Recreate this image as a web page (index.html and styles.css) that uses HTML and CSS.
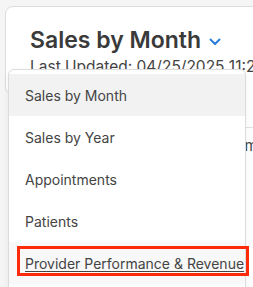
FILE: index.html
```html
<!DOCTYPE html>
<html>
<head>
<meta charset="utf-8">
<link rel="stylesheet" href="styles.css">
</head>
<body>
<div class="page">
  <div class="header-card">
    <div class="title-row">
      <h1 class="title">Sales by Month</h1>
      <svg class="chev" width="12" height="8" viewBox="0 0 12 8"><path d="M1.5 1.5 L6 6 L10.5 1.5" fill="none" stroke="#2b7de0" stroke-width="2" stroke-linecap="round" stroke-linejoin="round"/></svg>
    </div>
    <div class="updated">Last Updated: 04/25/2025 11:25 AM</div>
  </div>
  <div class="below">
    <div class="side-panel">
      <div class="side-line"></div>
      <div class="side-text">Summary</div>
      <div class="side-box"></div>
    </div>
  </div>
  <div class="menu">
    <div class="item active">Sales by Month</div>
    <div class="item">Sales by Year</div>
    <div class="item">Appointments</div>
    <div class="item">Patients</div>
    <div class="item hovered"><span class="focus-box"></span><span class="link">Provider Performance &amp; Revenue</span></div>
  </div>
</div>
</body>
</html>
```
FILE: styles.css
```css
html, body {
  margin: 0;
  padding: 0;
}
body {
  background: #f5f5f5;
  font-family: Inter, "Noto Sans", sans-serif;
  width: 253px;
  height: 287px;
  overflow: hidden;
}
.page {
  position: relative;
  width: 253px;
  height: 287px;
  box-sizing: border-box;
  padding: 6px 0 0 5px;
}
.header-card {
  width: 320px;
  height: 89px;
  box-sizing: border-box;
  background: #fff;
  border: 1px solid #dcdcdc;
  border-radius: 8px;
  padding: 19px 0 0 24px;
}
.title-row {
  display: flex;
  align-items: center;
  gap: 8px;
  height: 28px;
}
.title {
  margin: 0;
  font-size: 23px;
  font-weight: 600;
  color: #3a3a3a;
  white-space: nowrap;
}
.chev {
  margin-top: 3px;
}
.updated {
  margin-top: 3px;
  font-size: 15.5px;
  color: #444;
  white-space: nowrap;
}
.below {
  display: flex;
  justify-content: flex-end;
}
.side-panel {
  width: 15px;
  height: 200px;
  background: #fff;
  margin-top: -2px;
}
.side-line {
  margin-top: 34px;
  height: 1px;
  background: #e0e0e0;
}
.side-text {
  font-size: 15px;
  color: #444;
  margin-top: 8px;
  text-indent: -12px;
  white-space: nowrap;
  overflow: hidden;
}
.side-box {
  margin-top: 14px;
  margin-left: 1px;
  height: 32px;
  border-left: 1px solid #e2e2e2;
}
.menu {
  position: absolute;
  left: 8px;
  top: 69px;
  width: 238px;
  height: 240px;
  box-sizing: border-box;
  background: #fff;
  border: 1px solid #dcdcdc;
  border-radius: 6px;
  padding-top: 4px;
  box-shadow: 0 2px 6px rgba(0, 0, 0, 0.06);
}
.item {
  position: relative;
  height: 42px;
  display: flex;
  align-items: center;
  padding-left: 16px;
  font-size: 14px;
  color: #444;
  white-space: nowrap;
}
.item.active {
  background: #f2f2f2;
}
.item.hovered {
  background: #f8f8f8;
}
.link {
  text-decoration: underline;
  text-underline-offset: 2px;
  text-decoration-thickness: 1px;
}
.focus-box {
  position: absolute;
  left: 8px;
  top: 4px;
  width: 232px;
  height: 30px;
  box-sizing: border-box;
  border: 3px solid #ff2a0a;
}
```
